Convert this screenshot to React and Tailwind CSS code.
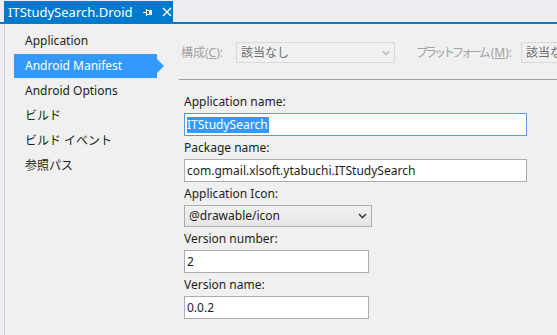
const MENU = ['Application', 'Android Manifest', 'Android Options', 'ビルド', 'ビルド イベント', '参照パス'];

const font = { fontFamily: '"Noto Sans", "Noto Sans CJK JP", sans-serif' };

function TextBox({ value, width, focused }) {
  return (
    <div className={`h-[23px] ${width} bg-white border flex items-center px-[2px] ${focused ? 'border-[#569de5]' : 'border-[#abadb3]'}`}>
      {focused ? (
        <span className="bg-[#3399ff] text-white leading-[16px] pr-[1px]">{value}</span>
      ) : (
        <span className="text-[#1e1e1e] leading-[16px]">{value}</span>
      )}
    </div>
  );
}

function Label({ children }) {
  return <div className="h-[23px] flex items-center text-[#1e1e1e]">{children}</div>;
}

export default function App() {
  return (
    <div className="w-[557px] h-[335px] bg-[#eeeef2] flex flex-col overflow-hidden text-[12px]" style={font}>
      {/* document tab */}
      <div className="h-[24px] flex items-end border-b-2 border-[#007acc] shrink-0">
        <div className="ml-[4px] h-[21px] w-[169px] bg-[#007acc] text-white flex items-center pl-[4px] text-[13px]">
          <span className="leading-[16px]">ITStudySearch.Droid</span>
          <svg width="10" height="10" viewBox="0 0 10 10" className="ml-[10px]" shapeRendering="crispEdges">
            <path d="M0 5.5H3M3.5 2V9M3.5 3.5H8.5V7.5H3.5" stroke="white" fill="none" />
            <rect x="6" y="4" width="2" height="3" fill="white" />
          </svg>
          <svg width="10" height="10" viewBox="0 0 10 10" className="ml-[9px]">
            <path d="M1 1L9 9M9 1L1 9" stroke="white" strokeWidth="1.4" />
          </svg>
        </div>
      </div>

      <div className="flex flex-1">
        <div className="w-[4px] bg-[#eeeef2] border-r border-[#ccccdb] shrink-0 box-content" />
        <div className="flex-1 flex bg-[#f0f0f0] min-w-0">
          {/* side menu */}
          <div className="w-[174px] shrink-0 pt-[5px] pl-[9px]">
            {MENU.map((m) => (
              <div key={m} className="h-[25px] relative">
                {m === 'Android Manifest' ? (
                  <div className="w-[143px] h-[24px] bg-[#3399ff] text-white flex items-center pl-[11px] relative">
                    {m}
                    <div className="absolute right-[-7px] top-[5px] w-0 h-0 border-y-[7px] border-y-transparent border-l-[7px] border-l-[#3399ff]" />
                  </div>
                ) : (
                  <div className="h-[24px] flex items-center pl-[11px] text-[#1e1e1e]">{m}</div>
                )}
              </div>
            ))}
          </div>

          {/* main */}
          <div className="flex-1 flex flex-col min-w-0">
            <div className="h-[56px] border-b border-[#a0a0a0] flex items-start pt-[18px] pl-[2px] text-[#a2a2a2] shrink-0 overflow-hidden whitespace-nowrap">
              <span className="h-[21px] flex items-center shrink-0">構成(<span className="underline">C</span>):</span>
              <div className="ml-[13px] w-[159px] h-[21px] border border-[#d9d9d9] flex items-center justify-between px-[4px] shrink-0">
                <span className="text-[#6d6d6d]">該当なし</span>
                <svg width="8" height="6" viewBox="0 0 8 6">
                  <path d="M1 1.5L4 4.5L7 1.5" stroke="#b0b0b0" strokeWidth="1.2" fill="none" />
                </svg>
              </div>
              <span className="h-[21px] flex items-center ml-[21px] shrink-0">
                <span className="tracking-[-3px] mr-[3px]">プラットフォーム</span>(<span className="underline">M</span>):
              </span>
              <div className="ml-[9px] w-[120px] h-[21px] border border-[#d9d9d9] flex items-center px-[4px] shrink-0">
                <span className="text-[#6d6d6d]">該当なし</span>
              </div>
            </div>

            <div className="pt-[10px] pl-[5px] flex flex-col">
              <Label>Application name:</Label>
              <TextBox value="ITStudySearch" width="w-[343px]" focused />
              <Label>Package name:</Label>
              <TextBox value="com.gmail.xlsoft.ytabuchi.ITStudySearch" width="w-[343px]" />
              <Label>Application Icon:</Label>
              <div className="h-[22px] w-[188px] border border-[#acacac] bg-gradient-to-b from-[#f2f2f2] to-[#e5e5e5] flex items-center justify-between px-[4px]">
                <span className="text-[#1e1e1e]">@drawable/icon</span>
                <svg width="9" height="6" viewBox="0 0 9 6">
                  <path d="M1 1L4.5 4.5L8 1" stroke="#404040" strokeWidth="1.6" fill="none" />
                </svg>
              </div>
              <Label>Version number:</Label>
              <TextBox value="2" width="w-[185px]" />
              <Label>Version name:</Label>
              <TextBox value="0.0.2" width="w-[185px]" />
            </div>
          </div>
        </div>
      </div>
    </div>
  );
}
